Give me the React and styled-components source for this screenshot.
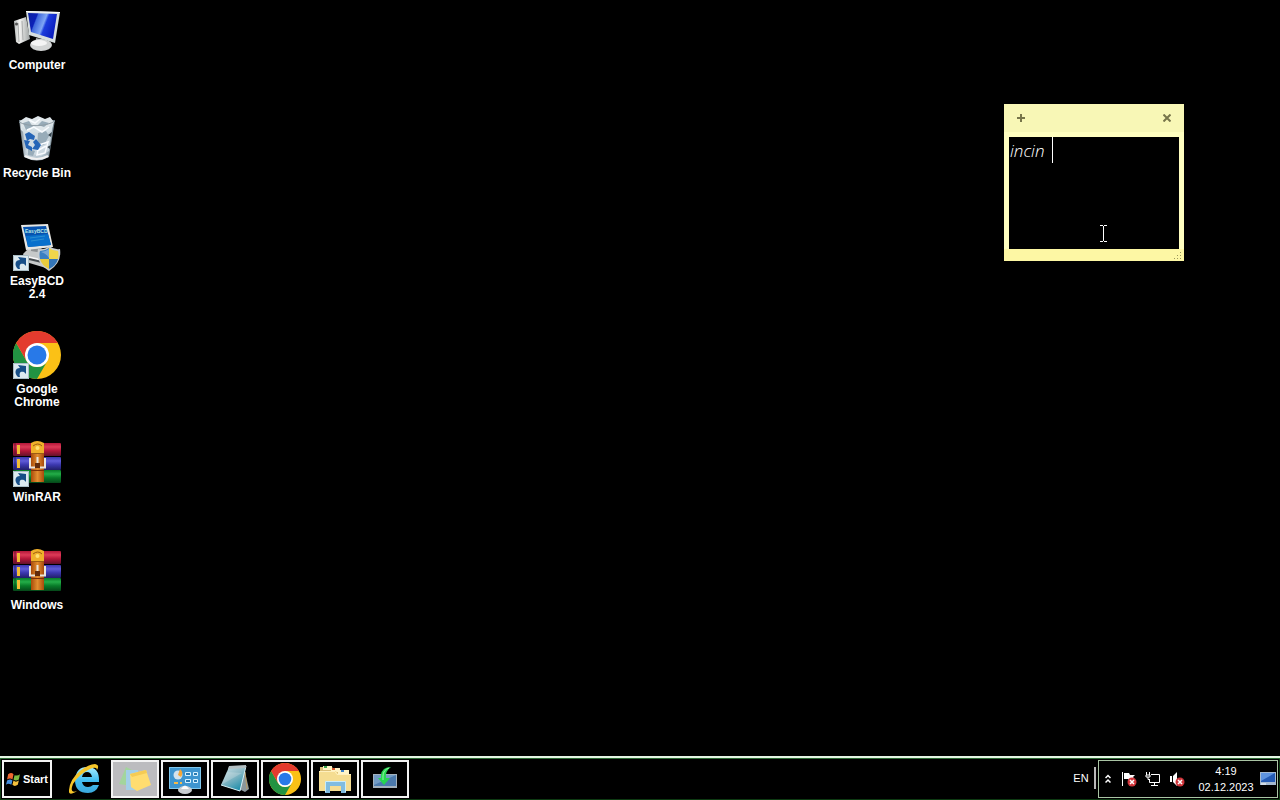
import React from "react";
import styled, { createGlobalStyle } from "styled-components";

const GlobalStyle = createGlobalStyle`
  * { box-sizing: border-box; }
  body {
    margin: 0;
    background: #000;
    color: #fff;
    font-family: "Liberation Sans", Arial, sans-serif;
  }
  button {
    font: inherit;
    color: inherit;
    background: none;
    border: 0;
    padding: 0;
    margin: 0;
  }
  svg { display: block; flex: none; }
`;

const Screen = styled.div`
  position: relative;
  display: flex;
  flex-direction: column;
  min-height: 100vh;
`;

const Desktop = styled.main`
  flex: 1;
`;

const ShortcutList = styled.ul`
  list-style: none;
  margin: 0;
  padding: 0;
  width: 74px;
  display: grid;
  grid-auto-rows: 108px;
`;

const Shortcut = styled.button`
  width: 100%;
  display: flex;
  flex-direction: column;
  align-items: center;
  gap: 4px;
  padding-top: 7px;
`;

const IconFrame = styled.span`
  position: relative;
  width: 48px;
  height: 48px;
`;

const LinkArrow = styled.svg`
  position: absolute;
  left: 0;
  bottom: 0;
`;

const ShortcutLabel = styled.span`
  width: 72px;
  font-size: 12px;
  font-weight: 700;
  line-height: 13px;
  text-align: center;
`;

const Note = styled.section`
  position: absolute;
  top: 104px;
  right: 96px;
  width: 180px;
  background: #fffec0;
`;

const NoteBar = styled.header`
  display: flex;
  justify-content: space-between;
  padding: 0 8px;
  background: #f8f7b6;
  color: #77754a;
`;

const NoteButton = styled.button`
  width: 18px;
  height: 28px;
  display: grid;
  place-items: center;
`;

const NoteBody = styled.div`
  position: relative;
  padding: 5px 5px 0;
`;

const NoteText = styled.textarea`
  display: block;
  width: 100%;
  height: 112px;
  padding: 2px 1px;
  border: 0;
  outline: 0;
  resize: none;
  overflow: hidden;
  background: #000;
  color: #fff;
  font-family: "Open Sans", sans-serif;
  font-size: 17px;
  font-style: italic;
  font-weight: 300;
  line-height: 24px;
`;

const Caret = styled.span`
  position: absolute;
  left: 48px;
  top: 5px;
  width: 1px;
  height: 26px;
  background: #fff;
`;

const Pointer = styled.svg`
  position: absolute;
  left: 95px;
  top: 93px;
`;

const NoteFoot = styled.footer`
  height: 12px;
  padding: 3px 2px;
  display: flex;
  justify-content: flex-end;
  background: #fdf7a4;
`;

const Taskbar = styled.footer`
  display: flex;
  align-items: center;
  justify-content: space-between;
  height: 44px;
  padding: 1px 2px 0;
  border-top: 2px solid #e4f5e2;
  border-bottom: 1px solid #0d3a12;
  box-shadow: inset 0 1px #2c6a34, inset 1px 0 #0d3a12, inset -1px 0 #0d3a12;
`;

const TaskGroup = styled.nav`
  display: flex;
  align-items: center;
  gap: 2px;
`;

const TaskButton = styled.button`
  width: 48px;
  height: 38px;
  display: grid;
  place-items: center;
  border: 2px solid ${(p) => (p.$plain ? "transparent" : "#f4f4f4")};
  background: ${(p) => (p.$active ? "#bcbcbf" : "transparent")};
`;

const StartButton = styled.button`
  width: 50px;
  height: 38px;
  margin-right: 7px;
  display: flex;
  align-items: center;
  justify-content: center;
  gap: 2px;
  border: 2px solid #f4f4f4;
  font-size: 11px;
  font-weight: 700;
`;

const TrayGroup = styled.div`
  display: flex;
  align-items: center;
`;

const Language = styled.button`
  width: 26px;
  height: 22px;
  padding-right: 2px;
  margin: 0 2px 2px 0;
  border-right: 2px solid #b8b8b8;
  font-size: 11px;
  text-align: center;
`;

const Tray = styled.div`
  display: flex;
  align-items: center;
  height: 38px;
  border: 1px solid #a9c4a4;
`;

const TrayButton = styled.button`
  width: ${(p) => (p.$narrow ? 18 : 24)}px;
  height: 36px;
  display: grid;
  place-items: center;
`;

const Clock = styled.time`
  width: 70px;
  padding-left: 4px;
  font-size: 11px;
  line-height: 16px;
  text-align: center;
`;

const Arrow = () => (
  <LinkArrow width="16" height="16" viewBox="0 0 16 16" aria-hidden="true">
    <path d="M0 0h16v16H0z" fill="#dce9ef" />
    <path d="M.5.5h15v15H.5z" fill="none" stroke="#a9bdc5" />
    <path d="M5 14C1 10 2 5 7 5L5 2l8 1 0 8-2-2C7 8 6 10 7 14z" fill="#174e87" />
  </LinkArrow>
);

const Computer = () => (
  <svg width="48" height="48" viewBox="0 0 48 48">
    <defs>
      <linearGradient id="screen" x1="0" y1="0" x2="1" y2=".35">
        <stop offset="0" stopColor="#0b22a0" />
        <stop offset=".3" stopColor="#0c20b8" />
        <stop offset=".34" stopColor="#3f68dc" />
        <stop offset=".6" stopColor="#7fa6f5" />
        <stop offset=".68" stopColor="#1c3cdc" />
        <stop offset="1" stopColor="#0b1fc0" />
      </linearGradient>
      <linearGradient id="case" x1="0" x2="1">
        <stop offset="0" stopColor="#b9bdbc" />
        <stop offset=".35" stopColor="#f5f5f3" />
        <stop offset="1" stopColor="#9da2a2" />
      </linearGradient>
    </defs>
    <path d="m1 14 12-4 4 22-11 5-3-2z" fill="url(#case)" />
    <path d="m5 16 1 19m3-21 1 19" stroke="#a9abab" />
    <circle cx="3.500" cy="17" r="1.500" fill="#555" />
    <path d="m23 31 10 2 1 6H22z" fill="#a0a4a6" />
    <ellipse cx="28" cy="38" rx="11" ry="6" fill="#d3d5d5" />
    <ellipse cx="26" cy="36" rx="8" ry="3" fill="#f4f4f4" />
    <path d="m13 4 34 1-5 31-26-8z" fill="#d7dedf" />
    <path d="m15 6 29 1-4 25-22-7z" fill="url(#screen)" />
    <path d="M13 4.500 47 5.500" stroke="#fff" />
  </svg>
);

const RecycleBin = () => (
  <svg width="48" height="48" viewBox="0 0 48 48">
    <defs>
      <linearGradient id="glass" x1="0" x2="1">
        <stop offset="0" stopColor="#6d7b84" />
        <stop offset=".2" stopColor="#c9d4dc" />
        <stop offset=".7" stopColor="#afc0cb" />
        <stop offset="1" stopColor="#61717b" />
      </linearGradient>
    </defs>
    <path d="m6 5 5 37q13 7 25 0l6-37z" fill="url(#glass)" />
    <path d="m7 6 6-4 6 2 6-3 7 3 5-2 4 5-3 9-7 3-9-2-8 3-6-5z" fill="#dfe6ea" />
    <path d="m9 12 7 5 5-7 7 8 8-7 4-2-4 27-8 5-14-3z" fill="#d1dde4" fillOpacity=".85" />
    <path d="m25 18 8-2 3 5-5 9-7 1zm4-12 7 2-5 4-6-2zM10 8l6-2 4 6-7 3zm5 26 7 2-2 5-5-1z" fill="#98acb9" />
    <path d="m35 20 4-3-1 5zm-1 12 4-2-1 4z" fill="#32414b" />
    <path d="m26 30 9-3-3 11-8 2zM16 5l6 3 5-4m-13 11 7-3 8 5 7-5M24 36l9-5" fill="none" stroke="#f9fcff" strokeWidth="1.500" />
    <path d="M6 7c9 5 27 5 36-1" fill="none" stroke="#8f9ca5" />
    <path d="m12 19 4-2 6 4-1 4-4-1-3 2zm-1 6 6 1-2 4 4 2v4l-6-3zm12-1 5 6-3 5-6-1 3-4-2-3z" fill="#2565b7" />
    <path d="M12 41q12 6 23 0" fill="none" stroke="#f1f1f1" strokeWidth="2" />
  </svg>
);

const Shield = () => (
  <>
    <path d="M36 23q5 4 11 3 2 14-11 22Q22 40 25 26q7 1 11-3z" fill="#c9ced0" />
    <path d="M36 25v11h-9q-1-5 0-8 5 0 9-3z" fill="#3b7fc2" />
    <path d="M36 25q4 3 9 3 1 4 0 8h-9z" fill="#f1d64b" />
    <path d="M27 36h9v10q-7-3-9-10z" fill="#e8cb3d" />
    <path d="M36 36h9q-2 7-9 10z" fill="#3476b8" />
    <path d="M28 29q4 0 8-3v9q-3-5-8-6z" fill="#fff" opacity=".3" />
  </>
);

const EasyBcd = () => (
  <svg width="48" height="48" viewBox="0 0 48 48">
    <path d="m10 31 6-6 20 3 4 12-7 5-20-6z" fill="#c6c9c9" />
    <path d="m10 33 22 5 4-5" stroke="#f8f8f8" strokeWidth="2" fill="none" />
    <path d="m16 36 13 3" stroke="#464c50" strokeWidth="2" />
    <path d="m18 23 10 1 2 6-12-2z" fill="#8d9193" />
    <path d="m8 2 27-1 5 23-27 3z" fill="#e6e6e3" />
    <path d="m10 4 23-1 5 19-23 2z" fill="#0752ae" />
    <path d="m13 13 22-2 3 11-23 2z" fill="#0870cc" />
    <text x="12" y="10" fontFamily="Liberation Sans" fontSize="5" fontWeight="700" fill="#bce8e5">EasyBCD</text>
    <path d="m17 15 15-2m-14 5 13-2" stroke="#2c8ed0" />
    <Shield />
  </svg>
);

const Chrome = ({ size = 48 }) => (
  <svg width={size} height={size} viewBox="0 0 48 48">
    <circle cx="24" cy="24" r="24" fill="#fbc116" />
    <path d="M3.200 12A24 24 0 0 0 24 48L34.400 30A12 12 0 0 1 13.600 30z" fill="#229342" />
    <path d="M3.200 12A24 24 0 0 1 44.800 12H24L13.600 30z" fill="#e33b2e" />
    <circle cx="24" cy="24" r="12" fill="#fff" />
    <circle cx="24" cy="24" r="9.500" fill="#2879e8" />
  </svg>
);

const books = [
  { y: 4, id: "red", light: "#dc3b58", base: "#b31639", dark: "#63122c" },
  { y: 18, id: "violet", light: "#5f5bd8", base: "#3b37ae", dark: "#211f68" },
  { y: 31, id: "green", light: "#24ad48", base: "#087b29", dark: "#054719" },
];

const WinRar = () => (
  <svg width="48" height="48" viewBox="0 0 48 48">
    <defs>
      <linearGradient id="strap" x1="0" x2="1">
        <stop offset="0" stopColor="#a94b0a" />
        <stop offset=".5" stopColor="#e28e30" />
        <stop offset="1" stopColor="#a84a0b" />
      </linearGradient>
      {books.map((b) => (
        <linearGradient key={b.id} id={b.id} x1="0" y1="0" x2="0" y2="1">
          <stop offset="0" stopColor={b.base} />
          <stop offset=".3" stopColor={b.light} />
          <stop offset=".6" stopColor={b.base} />
          <stop offset="1" stopColor={b.dark} />
        </linearGradient>
      ))}
    </defs>
    {books.map((b) => (
      <g key={b.id}>
        <rect y={b.y} width="48" height="13" rx="1" fill={`url(#${b.id})`} />
        <path d={`M2 ${b.y}v12`} stroke={b.dark} />
        <path d={`M5.500 ${b.y + 2}v9`} stroke="#f2bd35" strokeWidth="3" />
      </g>
    ))}
    <path d="M18 5q6-5 13 0v38H18z" fill="url(#strap)" />
    <path d="M18 4q6-4 13 0v11H18z" fill="#f0b02a" />
    <path d="M20 7q5-4 9 0M18 14.500h13" fill="none" stroke="#9b5b13" />
    <circle cx="24.500" cy="9" r="2" fill="#ffdf71" />
    <path d="M17 19v9.500h5M32 19v9.500h-5M24.500 18v7" fill="none" stroke="#e9e5dc" strokeWidth="2" />
    <path d="M22 24h5v5h-5z" fill="#612b0c" />
    <path d="M18 31h13v1H18z" fill="#7c2f08" />
  </svg>
);

const Flag = () => (
  <svg width="15" height="15" viewBox="0 0 14 14">
    <path d="M2 2q3-2 5 0L6 7Q4 5 1 7z" fill="#ed6931" />
    <path d="M8 3q3 1 5-1l-1 5Q9 9 7 7z" fill="#79bc42" />
    <path d="M1 8q3-2 5 0l-1 4q-3-2-5 0z" fill="#438fe0" />
    <path d="M7 8q2 2 5 0l-1 4q-3 2-5 0z" fill="#f4c13e" />
  </svg>
);

const Explorer = () => (
  <svg width="32" height="32" viewBox="0 0 32 32">
    <defs>
      <linearGradient id="blueE" x1="0" y1="0" x2="0" y2="1">
        <stop offset="0" stopColor="#a9edff" />
        <stop offset=".5" stopColor="#44bff2" />
        <stop offset="1" stopColor="#3ba8dc" />
      </linearGradient>
    </defs>
    <path d="M30 19H13q1 5 6 5 3 0 5-2h6q-3 8-11 8-13 0-13-13Q7 4 18 4q13 0 12 15zM13 14h10q-1-5-5-5t-5 5z" fillRule="evenodd" fill="url(#blueE)" />
    <path d="M28 7q0-4-7-1Q10 11 4 21q-4 10 4 7-9 6-8-1Q1 16 11 8 20 1 26 1q5 1 2 6z" fill="#f5c52a" />
  </svg>
);

const StickyNotes = () => (
  <svg width="32" height="32" viewBox="0 0 32 32">
    <path d="M7 4 0 21l13 2 2-15z" fill="#a3d59d" />
    <path d="M7 7h12l1 20H7z" fill="#a3cfe8" />
    <path d="m11 11 16-4 5 15-14 6-6-4z" fill="#ffdd70" />
    <path d="m11 11 16-4 1 3-15 4z" fill="#f5cb54" />
  </svg>
);

const ControlPanel = () => (
  <svg width="32" height="32" viewBox="0 0 32 32">
    <path d="M0 4h32v22H0z" fill="#3d95cf" />
    <path d="M.5 4.500h31v21H.5z" fill="none" stroke="#80c8ed" />
    <circle cx="9" cy="12" r="4.500" fill="#d3e3ed" />
    <path d="M9 12 11 6q4 3 1 8z" fill="#f4a637" />
    <path d="M16.500 9.500h5v3h-5zm8 0h4v3h-4zm-8 7h5v3h-5zm8 0h4v3h-4z" fill="#287bb3" stroke="#d7f2ff" />
    <path d="M5 20h4m2 0h2" stroke="#f4bb4c" strokeWidth="2" />
    <ellipse cx="16" cy="27" rx="7" ry="4" fill="#c9ced1" />
    <path d="M12 26q4-7 8 0" fill="#fafafa" />
  </svg>
);

const Notepad = () => (
  <svg width="32" height="32" viewBox="0 0 32 32">
    <defs>
      <linearGradient id="pad" x1="0" y1="0" x2=".6" y2="1">
        <stop offset="0" stopColor="#cfe6eb" />
        <stop offset=".5" stopColor="#8ebac6" />
        <stop offset="1" stopColor="#2390ac" />
      </linearGradient>
    </defs>
    <path d="m25 5 5 21-4 3-6-3z" fill="#8b979c" />
    <path d="m26 9 2 17" stroke="#b99c65" />
    <path d="M10 4l17-1-6 25L2 22z" fill="url(#pad)" />
    <path d="m2 22 19 6 6-25" fill="none" stroke="#d8f1f6" />
    <path d="m10 3 17-1v3l-18 1z" fill="#b4bfc2" />
    <path d="m8 9 15 1L2 22z" fill="#fff" opacity=".2" />
  </svg>
);

const Folder = () => (
  <svg width="34" height="32" viewBox="0 0 34 32">
    <path d="M2 4h12l2 3h15v20H2z" fill="#dcc078" />
    <path d="M5 3h9v4H5z" fill="#fff4c6" />
    <path d="M6 3h3v2H6z" fill="#3ba550" />
    <path d="M13 5h9v4h-9z" fill="#fff4c6" />
    <path d="M14 5h3v2h-3z" fill="#d7552b" />
    <path d="M20 7h11v4H20z" fill="#fff4c6" />
    <path d="M23 7h3v2h-3z" fill="#3b80ca" />
    <path d="M1 8h17l2 3h13v17H1z" fill="#f5dd91" />
    <path d="M1 8.500h16l2 3h14" fill="none" stroke="#fff0bd" />
    <path d="M7 30V20q0-2 2-2h17q2 0 2 2v10h-5v-7H12v7z" fill="#80bce0" />
    <path d="M7.500 29V18.500h20V29" fill="none" stroke="#c9edfb" />
  </svg>
);

const Installer = () => (
  <svg width="26" height="26" viewBox="0 0 26 26">
    <path d="M1 8h24v14H1z" fill="#a3b1bd" />
    <path d="M2 9h22v11H2z" fill="#4b79ac" />
    <path d="M2 9h22L2 19z" fill="#729bc4" />
    <path d="M19 1q-9 0-10 8v3H6l6 7 6-7h-4Q13 5 19 1z" fill="#26d650" />
    <path d="M17 2q-6 2-6 8v4" fill="none" stroke="#91f6a2" />
  </svg>
);

const ErrorBadge = () => (
  <>
    <circle cx="11" cy="11" r="4.500" fill="#d0353b" />
    <path d="m9 9 4 4m0-4-4 4" stroke="#fff" strokeWidth="1.500" />
  </>
);

const shortcuts = [
  { name: "Computer", icon: <Computer /> },
  { name: "Recycle Bin", icon: <RecycleBin /> },
  { name: "EasyBCD 2.4", icon: <EasyBcd />, link: true },
  { name: "Google Chrome", icon: <Chrome />, link: true },
  { name: "WinRAR", icon: <WinRar />, link: true },
  { name: "Windows", icon: <WinRar /> },
];

const tasks = [
  { name: "Internet Explorer", icon: <Explorer />, plain: true },
  { name: "Sticky Notes", icon: <StickyNotes />, active: true },
  { name: "Control Panel", icon: <ControlPanel /> },
  { name: "Notepad", icon: <Notepad /> },
  { name: "Chrome", icon: <Chrome size={32} /> },
  { name: "File Explorer", icon: <Folder /> },
  { name: "Installer", icon: <Installer /> },
];

export default function App() {
  return (
    <Screen>
      <GlobalStyle />
      <Desktop>
        <ShortcutList>
          {shortcuts.map((s) => (
            <li key={s.name}>
              <Shortcut type="button">
                <IconFrame>
                  {s.icon}
                  {s.link && <Arrow />}
                </IconFrame>
                <ShortcutLabel>{s.name}</ShortcutLabel>
              </Shortcut>
            </li>
          ))}
        </ShortcutList>
        <Note aria-label="Sticky note">
          <NoteBar>
            <NoteButton type="button" aria-label="New note">
              <svg width="8" height="8" viewBox="0 0 8 8">
                <path d="M4 0v8M0 4h8" stroke="currentColor" strokeWidth="2" />
              </svg>
            </NoteButton>
            <NoteButton type="button" aria-label="Delete note">
              <svg width="8" height="8" viewBox="0 0 8 8">
                <path d="m.5.5 7 7m0-7-7 7" stroke="currentColor" strokeWidth="2" />
              </svg>
            </NoteButton>
          </NoteBar>
          <NoteBody>
            <NoteText aria-label="Note text" defaultValue="incin " spellCheck={false} />
            <Caret />
            <Pointer width="9" height="17" viewBox="0 0 9 17" aria-hidden="true">
              <path d="M1 .5h3m1 0h3M4.500 1v15M1 16.500h3m1 0h3" stroke="#fff" />
            </Pointer>
          </NoteBody>
          <NoteFoot>
            <svg width="8" height="8" viewBox="0 0 8 8" aria-hidden="true">
              <path d="M6 0h1v1H6zM3 3h1v1H3zm3 0h1v1H6zM0 6h1v1H0zm3 0h1v1H3zm3 0h1v1H6z" fill="#99965a" />
            </svg>
          </NoteFoot>
        </Note>
      </Desktop>
      <Taskbar>
        <TaskGroup aria-label="Taskbar">
          <StartButton type="button">
            <Flag />
            Start
          </StartButton>
          {tasks.map((t) => (
            <TaskButton key={t.name} type="button" aria-label={t.name} $plain={t.plain} $active={t.active}>
              {t.icon}
            </TaskButton>
          ))}
        </TaskGroup>
        <TrayGroup>
          <Language type="button">EN</Language>
          <Tray>
            <TrayButton type="button" aria-label="Show hidden icons" $narrow>
              <svg width="6" height="10" viewBox="0 0 6 10">
                <path d="m.5 4 2.500-2.500L5.500 4m-5 4.500L3 6l2.500 2.500" fill="none" stroke="#fff" strokeWidth="1.500" />
              </svg>
            </TrayButton>
            <TrayButton type="button" aria-label="Action Center">
              <svg width="16" height="16" viewBox="0 0 16 16">
                <path d="M1.500 1v14" stroke="#fff" />
                <path d="M3 2h5l1 2h5l-2 2 2 3H8L7 8H3z" fill="#fff" />
                <ErrorBadge />
              </svg>
            </TrayButton>
            <TrayButton type="button" aria-label="Network">
              <svg width="16" height="16" viewBox="0 0 16 16">
                <path d="M6 3.500h8.500v8h-10V8M9.500 12v2M6 14.500h7M1.500 1v3M4.500 1v3M1 4h4v2H1zM3 6v2.500h2" fill="none" stroke="#fff" />
              </svg>
            </TrayButton>
            <TrayButton type="button" aria-label="Volume muted">
              <svg width="16" height="16" viewBox="0 0 16 16">
                <path d="M1 5h2v6H1zm3 0 4-4v14l-4-4z" fill="#fff" />
                <ErrorBadge />
              </svg>
            </TrayButton>
            <Clock dateTime="2023-12-02T04:19">
              4:19
              <br />
              02.12.2023
            </Clock>
            <TrayButton type="button" aria-label="Show desktop" $narrow>
              <svg width="16" height="14" viewBox="0 0 16 14">
                <path d="M0 0h16v13H0z" fill="#a4b9d0" />
                <path d="M1 1h14v9H1z" fill="#245bb4" />
                <path d="M1 1h14L1 9z" fill="#5d93df" />
                <path d="M1 12h5" stroke="#fff" />
              </svg>
            </TrayButton>
          </Tray>
        </TrayGroup>
      </Taskbar>
    </Screen>
  );
}
